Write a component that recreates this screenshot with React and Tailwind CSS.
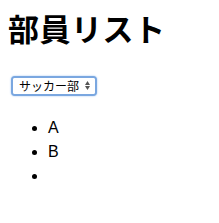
import React from 'react';

const members = ['A', 'B', ''];

const App = () => {
  return (
    <div className="w-[219px] h-[223px] bg-white px-2 text-black font-['Liberation_Sans','Noto_Sans_CJK_JP',sans-serif]">
      <h1 className="pt-[11px] text-[31px] leading-[34px] font-bold tracking-[0.5px] font-['Noto_Sans_CJK_JP',sans-serif]">
        部員リスト
      </h1>
      <div className="mt-[31px] ml-[3px] relative w-[86px] h-[20px] rounded-[4px] border-2 border-[#7aa7e0] bg-white shadow-[0_0_2px_#9cc0ee] overflow-hidden">
        <select className="block appearance-none w-full h-[16px] m-0 py-0 pr-[14px] bg-white pl-[6px] text-[12px] leading-[16px] font-['Noto_Sans_CJK_JP',sans-serif] outline-none border-0">
          <option>サッカー部</option>
          <option>野球部</option>
        </select>
        <span className="pointer-events-none absolute right-[5px] top-[3px] flex flex-col items-center gap-[1px]">
          <svg width="5" height="4" viewBox="0 0 5 4"><path d="M0 4L2.5 0L5 4Z" fill="#555" /></svg>
          <svg width="5" height="4" viewBox="0 0 5 4"><path d="M0 0L2.5 4L5 0Z" fill="#555" /></svg>
        </span>
      </div>
      <ul className="mt-[20px] pl-[40px] list-disc text-[16px] leading-[24px]">
        {members.map((m, i) => (
          <li key={i} className="h-[24px]">{m}</li>
        ))}
      </ul>
    </div>
  );
};

export default App;
